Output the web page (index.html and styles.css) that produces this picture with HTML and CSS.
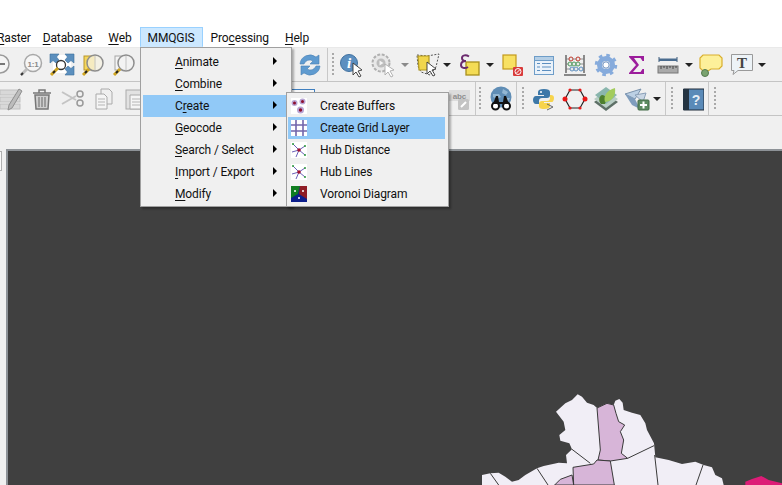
FILE: index.html
```html
<!DOCTYPE html>
<html lang="en">
<head>
<meta charset="utf-8">
<title>QGIS MMQGIS menu</title>
<link rel="stylesheet" href="styles.css">
</head>
<body>
<div class="app">
  <nav class="menubar">
    <span class="mi raster"><u>R</u>aster</span>
    <span class="mi"><u>D</u>atabase</span>
    <span class="mi"><u>W</u>eb</span>
    <span class="mi active">MMQGIS</span>
    <span class="mi">Pro<u>c</u>essing</span>
    <span class="mi"><u>H</u>elp</span>
  </nav>

  <div class="toolbar row1">
    <span class="slot"><svg width="24" height="24" viewBox="0 0 24 24"><circle cx="12" cy="11" r="9" fill="#f4f4f4" stroke="#9a9a9a" stroke-width="1.500"/><rect x="7" y="10" width="10" height="2" fill="#777"/><path d="M6 17l-5 5" stroke="#c9a227" stroke-width="3"/></svg></span>
    <span class="slot"><svg width="24" height="24" viewBox="0 0 24 24"><circle cx="14" cy="10" r="8.500" fill="#f6f6f6" stroke="#a8a8a8" stroke-width="1.500"/><text x="14" y="13.500" class="svgt">1:1</text><path d="M8 16l-6 6" stroke="#bdbdbd" stroke-width="3"/><path d="M2 22l2-2" stroke="#333" stroke-width="2"/></svg></span>
    <span class="slot"><svg width="26" height="24" viewBox="0 0 26 24"><rect x="4" y="2" width="18" height="18" fill="#fff"/><path d="M1 1h9L7.500 4 10 7 7 10 4 7.500 1 10zM25 1h-9l2.500 3L16 7l3 3 3-2.500 3 2.500zM25 22h-9l2.500-3-2.500-3 3-3 3 2.500 3-2.500z" fill="#5b8fbe" stroke="#3d6e9c" stroke-width=".6"/><circle cx="12" cy="12" r="4.500" fill="none" stroke="#333" stroke-width="1.300"/><path d="M9 15l-7 7" stroke="#d0a520" stroke-width="3"/><path d="M6 18l-2 2" stroke="#222" stroke-width="2"/></svg></span>
    <span class="slot"><svg width="24" height="24" viewBox="0 0 24 24"><rect x="3" y="3" width="11" height="14" fill="#f5d75c" stroke="#b8962c"/><circle cx="14" cy="10" r="8" fill="#f5f2e2" fill-opacity=".75" stroke="#8d8d8d" stroke-width="1.500"/><path d="M14 3v14" stroke="#ccc"/><path d="M8 16l-6 6" stroke="#d0a520" stroke-width="3"/><path d="M6 18l-2 2" stroke="#222" stroke-width="2"/></svg></span>
    <span class="slot"><svg width="24" height="24" viewBox="0 0 24 24"><rect x="3" y="3" width="11" height="14" fill="#f4f4f4" stroke="#a5a5a5"/><circle cx="14" cy="10" r="8" fill="#f3f3f3" fill-opacity=".75" stroke="#8d8d8d" stroke-width="1.500"/><path d="M14 3v14" stroke="#ccc"/><path d="M8 16l-6 6" stroke="#d0a520" stroke-width="3"/><path d="M6 18l-2 2" stroke="#222" stroke-width="2"/></svg></span>
    <span class="gap155"></span>
    <span class="slot"><svg width="24" height="24" viewBox="0 0 24 24"><path d="M2 11a10 10 0 0 1 16-7l3-2v9h-9l3-3a6 6 0 0 0-9 3z" fill="#5f9bd0" stroke="#4b82b4" stroke-width=".6"/><path d="M22 13a10 10 0 0 1-16 7l-3 2v-9h9l-3 3a6 6 0 0 0 9-3z" fill="#5f9bd0" stroke="#4b82b4" stroke-width=".6"/></svg></span>
    <span class="divider d2"></span><span class="handle h1"></span>
    <span class="slot"><svg width="26" height="26" viewBox="0 0 26 26"><circle cx="10" cy="11" r="8.500" fill="#5c8fc0" stroke="#41719f"/><text x="10" y="16" class="svgi">i</text><path d="M14 11l0 12 3-3 3 5 2-1-3-5 4-1z" fill="#fff" stroke="#333" stroke-width=".9"/></svg></span>
    <span class="slot"><svg width="26" height="26" viewBox="0 0 26 26"><circle cx="11" cy="11" r="8.500" fill="#e8e8e8" stroke="#b0b0b0" stroke-width="2" stroke-dasharray="3 1.500"/><circle cx="11" cy="11" r="4.500" fill="#bdbdbd"/><path d="M9.500 8.500v5l4-2.500z" fill="#f4f4f4"/><path d="M15 12l0 11 3-3 3 5 2-1-3-5 4-1z" fill="#fff" stroke="#aaa" stroke-width=".9"/></svg></span>
    <span class="ar w14 dim"></span>
    <span class="slot"><svg width="26" height="26" viewBox="0 0 26 26"><path d="M2 3l10 1 12-2-3 13-6 8-9-3-3-6z" fill="none" stroke="#555" stroke-dasharray="2 1.500"/><path d="M3 4h11v14H4z" fill="#f1d64c" stroke="#b39a1e" stroke-width="1.200"/><path d="M12 10l0 12 3-3 3 5 2-1-3-5 4-1z" fill="#fff" stroke="#333" stroke-width=".9"/></svg></span>
    <span class="ar w8"></span>
    <span class="slot ml3"><svg width="24" height="24" viewBox="0 0 24 24"><rect x="8" y="9" width="13" height="13" fill="#f4dc55" stroke="#a88f1c" stroke-width="1.300"/><path d="M11 3.500C8 1.500 4 2 4 5c0 2 2 3 4 3-3 0-5 1.500-5 4 0 3 4 4 7 2" fill="none" stroke="#6b2a6e" stroke-width="2"/></svg></span>
    <span class="ar w10"></span>
    <span class="slot ml2"><svg width="24" height="24" viewBox="0 0 24 24"><rect x="2" y="2" width="13" height="14" fill="#f8e163" stroke="#c49a1c" stroke-width="1.200"/><rect x="12" y="14" width="10" height="9" rx="1" fill="#d93a3a"/><circle cx="17" cy="18.500" r="3" fill="none" stroke="#fff"/><path d="M15 20.500l4-4" stroke="#fff"/></svg></span>
    <span class="slot"><svg width="22" height="22" viewBox="0 0 22 22"><rect x="1.500" y="2.500" width="19" height="18" fill="#eaf2fa" stroke="#6e9dc8"/><rect x="1.500" y="2.500" width="19" height="4" fill="#b5cfe6" stroke="#6e9dc8"/><path d="M4 9.500h3M9 9.500h9M4 13h3M9 13h9M4 16.500h3M9 16.500h9" stroke="#5c8fc0"/></svg></span>
    <span class="slot"><svg width="24" height="24" viewBox="0 0 24 24"><path d="M3 2v18M21 2v18" stroke="#555" stroke-width="1.300"/><path d="M1 22h22" stroke="#888" stroke-width="2"/><path d="M3 6h18M3 11h18M3 16h18" stroke="#777" stroke-width=".8"/><g fill="#e9e9e9" stroke="#c0392b"><circle cx="8" cy="6" r="2"/><circle cx="15" cy="6" r="2"/></g><g fill="#e9e9e9" stroke="#4f9a5d"><circle cx="7" cy="11" r="2"/><circle cx="11" cy="11" r="2"/><circle cx="15" cy="11" r="2"/></g><g fill="#e9e9e9" stroke="#5c8fc0"><circle cx="9" cy="16" r="2"/><circle cx="13" cy="16" r="2"/><circle cx="18" cy="16" r="2"/></g></svg></span>
    <span class="slot"><svg width="24" height="24" viewBox="0 0 24 24"><circle cx="12" cy="12" r="6.500" fill="none" stroke="#86abdc" stroke-width="5"/><circle cx="12" cy="12" r="9.500" fill="none" stroke="#86abdc" stroke-width="3.500" stroke-dasharray="3.500 3.960"/><circle cx="12" cy="12" r="3.200" fill="#fff" stroke="#6d90c0"/></svg></span>
    <span class="slot"><svg width="22" height="22" viewBox="0 0 22 22"><path d="M3 2h15v5h-1.500l-2-3H8l5 7-6 7h7.500l2-3H18v5H3v-1l7-8-7-8z" fill="#9c1d9c"/></svg></span>
    <span class="slot"><svg width="24" height="24" viewBox="0 0 24 24"><path d="M3 4v5M21 4v5" stroke="#3d5a78"/><rect x="3" y="5.500" width="18" height="2.500" fill="#4a6c8f"/><rect x="2" y="13" width="20" height="7" fill="#a9a9a9" stroke="#777"/><path d="M5 13v3M8 13v2M11 13v3M14 13v2M17 13v3M20 13v2" stroke="#444"/></svg></span>
    <span class="ar w12"></span>
    <span class="slot"><svg width="24" height="24" viewBox="0 0 24 24"><path d="M4 2h16l3 3v8l-3 3H12l-3 2H4l-3-3V5z" fill="#fdf09a" stroke="#d9ae2c" stroke-width="1.200"/><circle cx="6" cy="20" r="3.500" fill="#7aa36f" stroke="#55794e"/></svg></span>
    <span class="slot"><svg width="24" height="24" viewBox="0 0 24 24"><path d="M1.500 1.500h21v16H8l-5 4 1-4H1.500z" fill="#edf3f7" stroke="#9a9a9a"/><text x="12" y="14.500" class="svgT">T</text></svg></span>
    <span class="ar w10"></span>
  </div>

  <div class="toolbar row2">
    <span class="slot"><svg width="24" height="24" viewBox="0 0 24 24"><rect x="1" y="3" width="20" height="5" fill="#d8d8d8" stroke="#c0c0c0"/><rect x="1" y="10" width="20" height="5" fill="#d8d8d8" stroke="#c0c0c0"/><rect x="1" y="17" width="20" height="5" fill="#d8d8d8" stroke="#c0c0c0"/><path d="M20 2l3 2-10 17-4 2 1-5z" fill="#bcbcbc" stroke="#8f8f8f"/></svg></span>
    <span class="slot"><svg width="22" height="24" viewBox="0 0 22 24"><path d="M2 6h18M8 6V3h6v3" fill="none" stroke="#777" stroke-width="1.500"/><path d="M4 8h14l-1 14H5z" fill="#cfcfcf" stroke="#777" stroke-width="1.500"/><path d="M8 10v10M11 10v10M14 10v10" stroke="#808080" stroke-width="1.300"/></svg></span>
    <span class="slot"><svg width="24" height="20" viewBox="0 0 24 20"><path d="M1 3l14 8M1 15l14-8" stroke="#c4c4c4" stroke-width="2"/><circle cx="19" cy="5" r="3" fill="none" stroke="#9a9a9a" stroke-width="1.500"/><circle cx="19" cy="14" r="3" fill="none" stroke="#9a9a9a" stroke-width="1.500"/></svg></span>
    <span class="slot"><svg width="20" height="24" viewBox="0 0 20 24"><path d="M7 2h8l3 3v12H7z" fill="#efefef" stroke="#aaa"/><path d="M2 7h8l3 3v12H2z" fill="#f5f5f5" stroke="#aaa"/><path d="M4 12h7M4 15h7M4 18h7" stroke="#b5b5b5"/></svg></span>
    <span class="slot"><svg width="20" height="24" viewBox="0 0 20 24"><rect x="1" y="3" width="15" height="19" fill="#e2e2e2" stroke="#aaa"/><path d="M5 8h14v14H5z" fill="#f5f5f5" stroke="#aaa"/><path d="M7 12h10M7 15h10M7 18h10" stroke="#b5b5b5"/></svg></span>
    <span class="gap140"></span>
    <span class="peek"></span>
    <span class="gap128"></span>
    <span class="slot"><svg width="26" height="24" viewBox="0 0 26 24"><rect x="3" y="3" width="21" height="11" fill="#dcdcdc"/><text x="13.500" y="12" class="svga">abc</text><rect x="12" y="12" width="11" height="11" rx="1.500" fill="#c4c4c4"/><path d="M15 20l5-5" stroke="#fff" stroke-width="2"/></svg></span>
    <span class="divider d1"></span><span class="handle h2"></span>
    <span class="slot"><svg width="26" height="26" viewBox="0 0 26 26"><circle cx="13" cy="11" r="10.500" fill="#5f8db5"/><path d="M5 8h6l2 3-4 2-4-2zM15 3l5 3-2 3-4-2zM17 12h5l-3 5z" fill="#93b7d3"/><circle cx="7.500" cy="20" r="3.500" fill="#fff" stroke="#111" stroke-width="2"/><circle cx="18.500" cy="20" r="3.500" fill="#fff" stroke="#111" stroke-width="2"/><path d="M8 10l-3 8h16l-3-8h-2l-1 6h-4l-1-6z" fill="#111"/></svg></span>
    <span class="divider"></span><span class="handle h5"></span>
    <span class="slot"><svg width="24" height="24" viewBox="0 0 24 24"><path d="M12 2c-4 0-6 1-6 3v3h6v1H4c-2 0-3 2-3 4s1 4 3 4h3v-3c0-2 1-3 3-3h5c2 0 3-1 3-3V5c0-2-2-3-6-3z" fill="#3d78a8"/><path d="M12 22c4 0 6-1 6-3v-3h-6v-1h8c1 0 2-2 2-4s-1-3-3-3h-1v3c0 2-1 3-3 3H10c-2 0-3 1-3 3v2c0 2 1 3 5 3z" fill="#f7d44c"/><circle cx="9" cy="5" r="1" fill="#fff"/><path d="M15 17l6 3-6 3" fill="none" stroke="#666"/></svg></span>
    <span class="slot"><svg width="26" height="24" viewBox="0 0 26 24"><path d="M3 12l5-9h10l5 9-5 9H8z" fill="none" stroke="#222" stroke-width="1.200"/><g fill="#e81818"><circle cx="3" cy="12" r="2.500"/><circle cx="23" cy="12" r="2.500"/><circle cx="8" cy="3" r="1.600"/><circle cx="18" cy="3" r="1.600"/><circle cx="8" cy="21" r="1.600"/><circle cx="18" cy="21" r="1.600"/></g></svg></span>
    <span class="slot"><svg width="26" height="26" viewBox="0 0 26 26"><path d="M13 8l12 8-12 9L1 16z" fill="#5d6f66"/><path d="M13 5l12 8-12 9L1 13z" fill="#b8cdc4"/><path d="M13 1l11 8-11 9L2 9z" fill="#8ab6ad"/><path d="M8 18c-3-3-2-8 1-9 4 0 5 4 3 9z" fill="#4d7f2e"/><path d="M12 16c-2-6 2-12 10-14 1 7-2 13-10 14z" fill="#a3cc5c"/></svg></span>
    <span class="slot"><svg width="26" height="24" viewBox="0 0 26 24"><path d="M1 7l16-5-6 10z" fill="#bcd0e4" stroke="#7b93ad"/><path d="M1 7l10 5 5 10-8-4z" fill="#7f9dbd"/><path d="M11 8l11-2-3 9z" fill="#c9d6e4" stroke="#8ba0b8"/><rect x="14" y="13" width="11" height="10" rx="1" fill="#5e8c62" stroke="#436a47"/><path d="M19.500 14.500v7M16 18h7" stroke="#fff" stroke-width="2"/></svg></span>
    <span class="ar w10"></span>
    <span class="divider d3"></span><span class="handle h5"></span>
    <span class="slot"><svg width="22" height="24" viewBox="0 0 22 24"><rect x="2" y="2" width="20" height="21" fill="#5a8ab8" stroke="#1f2b38"/><rect x="1" y="2" width="6" height="21" fill="#243442"/><text x="14" y="18" class="svgq">?</text></svg></span>
    <span class="divider"></span><span class="handle h5"></span>
  </div>

  <div class="toolbar row3"></div>

  <div class="workspace">
    <aside class="sidebar"><div class="tab"></div></aside>
    <main class="canvas">
      <svg class="map" width="300" height="105" viewBox="0 0 900 315">
        <path class="c0" d="M222 95L250 70 270 60 287 43 300 50 315 68 335 75 345 84 375 70 395 75 400 62 412 57 422 68 425 90 450 98 475 105 490 130 495 150 516 190 520 232 560 240 600 252 640 245 665 255 690 262 700 285 720 295 725 315 0 315 0 285 25 280 50 278 70 290 90 305 110 300 130 285 165 265 185 258 230 248 255 250 252 225 270 208 262 190 235 182 232 165 250 150 245 125z"/>
        <path class="c1" d="M345 84L375 70 395 75 402 100 410 125 428 135 415 155 425 180 418 220 437 235 385 243 348 240 355 210z"/>
        <path class="c1" d="M273 262L335 252 345 240 385 243 397 315 275 315zM218 315L235 298 270 285 275 315z"/>
        <path class="ln" d="M270 208L325 250M437 235L516 197M518 225L528 315M663 255L642 315M165 265L198 315M25 280L50 315"/>
        <path class="c2" d="M790 315V305L810 297 838 288 860 300 900 310V315z"/>
      </svg>
    </main>
  </div>

  <div class="menu main-menu">
    <div class="item"><span><u>A</u>nimate</span><i class="tri"></i></div>
    <div class="item"><span><u>C</u>ombine</span><i class="tri"></i></div>
    <div class="item on"><span>C<u>r</u>eate</span><i class="tri"></i></div>
    <div class="item"><span><u>G</u>eocode</span><i class="tri"></i></div>
    <div class="item"><span><u>S</u>earch / Select</span><i class="tri"></i></div>
    <div class="item"><span><u>I</u>mport / Export</span><i class="tri"></i></div>
    <div class="item"><span><u>M</u>odify</span><i class="tri"></i></div>
  </div>

  <div class="menu sub-menu">
    <div class="item sub"><svg width="16" height="16" viewBox="0 0 16 16"><rect width="16" height="16" fill="#fff"/><circle cx="3.500" cy="5" r="3" fill="#b9a6d4"/><circle cx="3.500" cy="5" r="1.500" fill="#8e0f2f"/><circle cx="11.500" cy="3.500" r="3" fill="#b9a6d4"/><circle cx="11.500" cy="3.500" r="1.500" fill="#8e0f2f"/><circle cx="9.500" cy="12" r="3.500" fill="#b9a6d4"/><circle cx="9.500" cy="12" r="1.700" fill="#8e0f2f"/></svg><span>Create Buffers</span></div>
    <div class="item sub on"><svg width="16" height="16" viewBox="0 0 16 16"><rect width="16" height="16" fill="#fff"/><path d="M5 0v16M12 0v16M0 5h16M0 11h16" stroke="#7366ac" stroke-width="1.600"/></svg><span>Create Grid Layer</span></div>
    <div class="item sub"><svg width="16" height="16" viewBox="0 0 16 16"><rect width="16" height="16" fill="#fff"/><path d="M8 8L2 2M8 8l6-4M8 8L1 10M8 8l-3 7M8 8l6 5" stroke="#6a60b8"/><circle cx="2" cy="2" r="1" fill="#2c9a3c"/><circle cx="14" cy="4" r="1" fill="#2c9a3c"/><circle cx="14" cy="13" r="1" fill="#2c9a3c"/><circle cx="8" cy="8" r="1.800" fill="#a01030"/></svg><span>Hub Distance</span></div>
    <div class="item sub"><svg width="16" height="16" viewBox="0 0 16 16"><rect width="16" height="16" fill="#fff"/><path d="M8 8L2 2M8 8l6-4M8 8L1 10M8 8l-3 7M8 8l6 5" stroke="#6a60b8"/><circle cx="2" cy="2" r="1" fill="#2c9a3c"/><circle cx="14" cy="4" r="1" fill="#2c9a3c"/><circle cx="14" cy="13" r="1" fill="#2c9a3c"/><circle cx="8" cy="8" r="1.800" fill="#a01030"/></svg><span>Hub Lines</span></div>
    <div class="item sub"><svg width="16" height="16" viewBox="0 0 16 16"><rect width="16" height="16" fill="#0d1f8c"/><path d="M0 0h9L7 8 0 12z" fill="#0f7d20"/><path d="M9 0h7v13L8 8z" fill="#8e1c25"/><circle cx="4" cy="5" r="1" fill="#fff"/><circle cx="12" cy="5" r="1" fill="#fff"/><circle cx="8" cy="12" r="1" fill="#fff"/></svg><span>Voronoi Diagram</span></div>
  </div>
</div>
</body>
</html>
```
FILE: styles.css
```css
* { box-sizing: border-box; }
html, body { margin: 0; height: 100%; }
body { overflow: hidden; background: #fff; font-family: "Roboto", "Liberation Sans", sans-serif; font-size: 12px; letter-spacing: -.13px; color: #111; }
u { text-underline-offset: 2px; text-decoration-thickness: 1px; }

.app { position: relative; width: 782px; height: 485px; overflow: hidden; display: flex; flex-direction: column; }

.menubar { height: 47px; flex: none; background: #fff; display: flex; align-items: flex-end; margin-left: -11px; }
.mi { height: 20px; line-height: 20px; padding: 0 7px; border: 1px solid transparent; white-space: nowrap; }
.mi.raster { padding-right: 3px; }
.mi.active { background: #cce8ff; border-color: #99d1ff; border-bottom-color: #cce8ff; }

.toolbar { flex: none; display: flex; align-items: center; background: #f0f0f0; }
.row1 { height: 35px; margin-left: -16px; width: 830px; border-top: 1px solid #e9e9e9; border-bottom: 1px solid #c4c4c4; }
.row2 { height: 34px; margin-left: -5px; width: 830px; border-bottom: 1px solid #c4c4c4; }
.row3 { height: 33px; }

.slot { width: 31px; flex: none; display: flex; justify-content: center; align-items: center; }
.slot svg { display: block; }
.ml2 { margin-left: 2px; }
.ml3 { margin-left: 3px; }
.gap155 { width: 155px; flex: none; }
.gap140 { width: 140px; flex: none; }
.gap128 { width: 128px; flex: none; }
.peek { width: 25px; height: 16px; flex: none; align-self: flex-start; margin-top: 7px; border: 1px solid #3f7fbf; background: #f7f7f7; }

.divider { width: 1px; flex: none; align-self: stretch; background: #c8c8c8; }
.d1 { margin-left: 1px; }
.d2 { margin-left: 2px; }
.d3 { margin-left: 3px; }
.handle { width: 2px; height: 24px; flex: none; background: repeating-linear-gradient(to bottom, #a9a9a9 0 2px, transparent 2px 4px); }
.h1 { margin: 0 2px 0 4px; }
.h2 { margin: 0 4px 0 3px; }
.h5 { margin: 0 4px 0 5px; }

.ar { flex: none; height: 4px; position: relative; }
.ar::after { content: ""; position: absolute; left: 50%; top: 0; margin-left: -4px; border-left: 4px solid transparent; border-right: 4px solid transparent; border-top: 4px solid #222; }
.ar.dim::after { border-top-color: #8a8a8a; }
.w8 { width: 8px; }
.w10 { width: 10px; }
.w12 { width: 12px; }
.w14 { width: 14px; }

.workspace { flex: 1; min-height: 0; display: flex; background: #f0f0f0; }
.sidebar { width: 6px; flex: none; padding-top: 2px; }
.tab { width: 2px; height: 20px; background: #fafafa; border-right: 1px solid #b0b0b0; border-top: 1px solid #b0b0b0; border-bottom: 1px solid #b0b0b0; }
.canvas { flex: 1; position: relative; overflow: hidden; background: #404040; border-top: 2px solid #8d9297; border-left: 2px solid #8d9297; }
.map { position: absolute; right: 0; bottom: 0; display: block; }
.c0 { fill: #f1eef6; }
.c1 { fill: #d7b5d8; stroke: #3a3a3a; stroke-width: 3; stroke-linejoin: round; }
.c2 { fill: #dd1c77; }
.ln { fill: none; stroke: #3a3a3a; stroke-width: 3; }

.menu { position: absolute; background: #f0f0f0; border: 1px solid #a0a0a0; box-shadow: 2px 2px 2px rgba(0,0,0,.3); }
.main-menu { left: 140px; top: 47px; width: 152px; height: 160px; padding: 3px 2px 2px; }
.sub-menu { left: 286px; top: 92px; width: 163px; height: 115px; padding: 2px 3px 2px 1px; }
.item { height: 22px; display: flex; align-items: center; justify-content: space-between; padding: 0 12px 0 32px; white-space: nowrap; }
.item.on { background: #91c9f7; }
.tri { width: 0; height: 0; border-top: 4px solid transparent; border-bottom: 4px solid transparent; border-left: 4px solid #000; margin-bottom: 2px; }
.item.sub { justify-content: flex-start; padding: 0 0 0 3px; gap: 13px; }
.item.sub svg { display: block; flex: none; }

.svgt { font: 700 8px "Liberation Sans", sans-serif; text-anchor: middle; fill: #8a8a8a; }
.svgi { font: italic 700 15px "Liberation Serif", serif; text-anchor: middle; fill: #fff; }
.svgT { font: 700 15px "Liberation Serif", serif; text-anchor: middle; fill: #444; }
.svga { font: 700 8px "Liberation Sans", sans-serif; text-anchor: middle; fill: #8e8e8e; }
.svgq { font: 700 14px "Liberation Sans", sans-serif; text-anchor: middle; fill: #e6eef6; }
```
